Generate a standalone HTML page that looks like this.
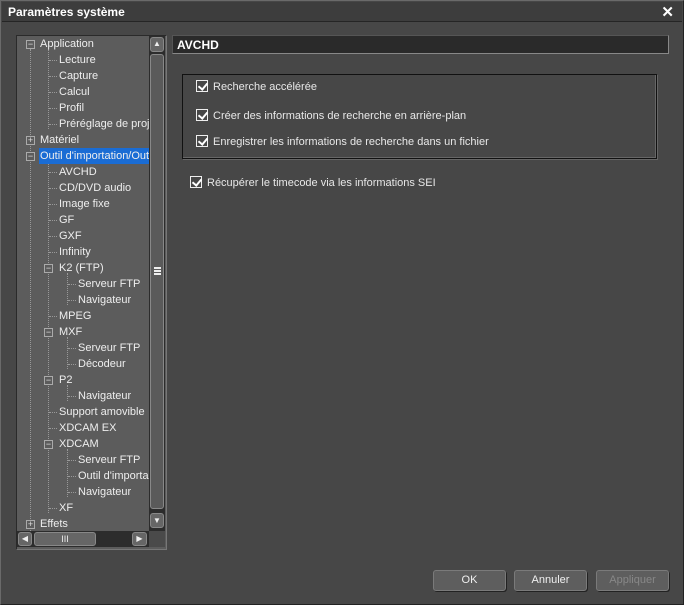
<!DOCTYPE html><html><head><style>
*{margin:0;padding:0;box-sizing:border-box}
body{width:684px;height:605px;background:#1e1e1e;font-family:"Liberation Sans",Tahoma,sans-serif;font-size:11px;color:#e8e8e8;position:relative;overflow:hidden}
.win{position:absolute;left:0;top:0;width:684px;height:605px;background:#474747;border:1px solid #6a6a6a;border-right-color:#222;border-bottom-color:#222}
.title{position:absolute;left:1px;top:1px;width:680px;height:20px;background:#3d3d3d;border-bottom:1px solid #252525;font-weight:bold;font-size:12px;color:#fff;padding:3px 6px}
.x{position:absolute;right:8px;top:1px;font-size:15px;font-weight:bold;color:#fff}
.tree{position:absolute;left:15px;top:34px;width:151px;height:515px;background:#5c5c5c;border:1px solid #2a2a2a;border-right-color:#777;border-bottom-color:#777;overflow:hidden}
.row{position:absolute;height:16px;line-height:16px;white-space:nowrap;color:#eeeeee}
.sel{background:#1a6cd4;padding:0 1px}
.box{position:absolute;width:9px;height:9px;border:1px solid #aaa;background:#5c5c5c;font-size:9px;line-height:7px;text-align:center;color:#ddd}
.vl{position:absolute;border-left:1px dotted #999;width:0}
.hl{position:absolute;border-top:1px dotted #999;height:0}
.vs{position:absolute;left:132px;top:0;width:16px;height:495px;background:#2c2c2c}
.btnS{position:absolute;background:#666;border:1px solid #888;border-radius:3px;color:#eee;font-size:8px;text-align:center}
.hs{position:absolute;left:0;top:495px;width:132px;height:16px;background:#2c2c2c}
.hdr{position:absolute;left:171px;top:34px;width:497px;height:19px;background:#2a2a2a;border:1px solid #888;border-top-color:#555;border-left-color:#555;font-weight:bold;font-size:12px;color:#fff;padding:2px 4px}
.grp{position:absolute;left:181px;top:73px;width:475px;height:85px;border:1px solid #111;box-shadow:inset -1px -1px 0 #666,1px 1px 0 #666}
.cb{position:absolute;height:14px;line-height:14px;white-space:nowrap}
.cb i{display:inline-block;width:12px;height:12px;border:1px solid #eee;vertical-align:-2px;margin-right:5px;position:relative}
.cb i:after{content:"";position:absolute;left:3px;top:0px;width:4px;height:7px;border:solid #fff;border-width:0 2px 2px 0;transform:rotate(40deg)}
.b{position:absolute;top:569px;width:73px;height:21px;background:#5e5e5e;border:1px solid #7a7a7a;border-radius:3px;box-shadow:1px 1px 0 #222;text-align:center;line-height:19px;font-size:11px;color:#f0f0f0}
.g{position:absolute;left:3px;width:7px;height:2px;background:#eee}
</style></head><body><div class="win">
<div class="title">Paramètres système<span class="x">✕</span></div>
<div class="tree">
<div class="vl" style="left:13px;top:13px;height:488px"></div>
<div class="vl" style="left:31px;top:13px;height:80px"></div>
<div class="vl" style="left:31px;top:125px;height:352px"></div>
<div class="vl" style="left:50px;top:237px;height:32px"></div>
<div class="vl" style="left:50px;top:301px;height:32px"></div>
<div class="vl" style="left:50px;top:349px;height:16px"></div>
<div class="vl" style="left:50px;top:413px;height:48px"></div>
<div class="box" style="left:9px;top:4px">−</div><div class="row" style="left:23px;top:0">Application</div>
<div class="hl" style="left:32px;top:24px;width:8px"></div><div class="row" style="left:42px;top:16px">Lecture</div>
<div class="hl" style="left:32px;top:40px;width:8px"></div><div class="row" style="left:42px;top:32px">Capture</div>
<div class="hl" style="left:32px;top:56px;width:8px"></div><div class="row" style="left:42px;top:48px">Calcul</div>
<div class="hl" style="left:32px;top:72px;width:8px"></div><div class="row" style="left:42px;top:64px">Profil</div>
<div class="hl" style="left:32px;top:88px;width:8px"></div><div class="row" style="left:42px;top:80px">Préréglage de proj</div>
<div class="box" style="left:9px;top:100px">+</div><div class="row" style="left:23px;top:96px">Matériel</div>
<div class="box" style="left:9px;top:116px">−</div><div class="row sel" style="left:22px;top:112px">Outil d'importation/Outil</div>
<div class="hl" style="left:32px;top:136px;width:8px"></div><div class="row" style="left:42px;top:128px">AVCHD</div>
<div class="hl" style="left:32px;top:152px;width:8px"></div><div class="row" style="left:42px;top:144px">CD/DVD audio</div>
<div class="hl" style="left:32px;top:168px;width:8px"></div><div class="row" style="left:42px;top:160px">Image fixe</div>
<div class="hl" style="left:32px;top:184px;width:8px"></div><div class="row" style="left:42px;top:176px">GF</div>
<div class="hl" style="left:32px;top:200px;width:8px"></div><div class="row" style="left:42px;top:192px">GXF</div>
<div class="hl" style="left:32px;top:216px;width:8px"></div><div class="row" style="left:42px;top:208px">Infinity</div>
<div class="box" style="left:27px;top:228px">−</div><div class="row" style="left:42px;top:224px">K2 (FTP)</div>
<div class="hl" style="left:51px;top:248px;width:8px"></div><div class="row" style="left:61px;top:240px">Serveur FTP</div>
<div class="hl" style="left:51px;top:264px;width:8px"></div><div class="row" style="left:61px;top:256px">Navigateur</div>
<div class="hl" style="left:32px;top:280px;width:8px"></div><div class="row" style="left:42px;top:272px">MPEG</div>
<div class="box" style="left:27px;top:292px">−</div><div class="row" style="left:42px;top:288px">MXF</div>
<div class="hl" style="left:51px;top:312px;width:8px"></div><div class="row" style="left:61px;top:304px">Serveur FTP</div>
<div class="hl" style="left:51px;top:328px;width:8px"></div><div class="row" style="left:61px;top:320px">Décodeur</div>
<div class="box" style="left:27px;top:340px">−</div><div class="row" style="left:42px;top:336px">P2</div>
<div class="hl" style="left:51px;top:360px;width:8px"></div><div class="row" style="left:61px;top:352px">Navigateur</div>
<div class="hl" style="left:32px;top:376px;width:8px"></div><div class="row" style="left:42px;top:368px">Support amovible</div>
<div class="hl" style="left:32px;top:392px;width:8px"></div><div class="row" style="left:42px;top:384px">XDCAM EX</div>
<div class="box" style="left:27px;top:404px">−</div><div class="row" style="left:42px;top:400px">XDCAM</div>
<div class="hl" style="left:51px;top:424px;width:8px"></div><div class="row" style="left:61px;top:416px">Serveur FTP</div>
<div class="hl" style="left:51px;top:440px;width:8px"></div><div class="row" style="left:61px;top:432px">Outil d'importa</div>
<div class="hl" style="left:51px;top:456px;width:8px"></div><div class="row" style="left:61px;top:448px">Navigateur</div>
<div class="hl" style="left:32px;top:472px;width:8px"></div><div class="row" style="left:42px;top:464px">XF</div>
<div class="box" style="left:9px;top:484px">+</div><div class="row" style="left:23px;top:480px">Effets</div>
<div class="vs">
<div class="btnS" style="left:1px;top:1px;width:14px;height:15px;line-height:12px">▲</div>
<div class="btnS" style="left:1px;top:18px;width:14px;height:455px;background:#5a5a5a"><div class="g" style="top:212px"></div><div class="g" style="top:215px"></div><div class="g" style="top:218px"></div></div>
<div class="btnS" style="left:1px;top:477px;width:14px;height:15px;line-height:13px">▼</div>
</div>
<div class="hs">
<div class="btnS" style="left:1px;top:1px;width:14px;height:14px;line-height:12px">◀</div>
<div class="btnS" style="left:17px;top:1px;width:62px;height:14px;line-height:12px;font-size:9px">III</div>
<div class="btnS" style="left:115px;top:1px;width:15px;height:14px;line-height:12px">▶</div>
</div>
<div style="position:absolute;left:132px;top:495px;width:16px;height:16px;background:#4a4a4a"></div>
</div>
<div class="hdr">AVCHD</div>
<div class="grp"></div>
<div class="cb" style="left:195px;top:79px"><i></i>Recherche accélérée</div>
<div class="cb" style="left:195px;top:108px"><i></i>Créer des informations de recherche en arrière-plan</div>
<div class="cb" style="left:195px;top:134px"><i></i>Enregistrer les informations de recherche dans un fichier</div>
<div class="cb" style="left:189px;top:175px"><i></i>Récupérer le timecode via les informations SEI</div>
<div class="b" style="left:432px">OK</div>
<div class="b" style="left:513px">Annuler</div>
<div class="b" style="left:595px;color:#888">Appliquer</div>
</div></body></html>
